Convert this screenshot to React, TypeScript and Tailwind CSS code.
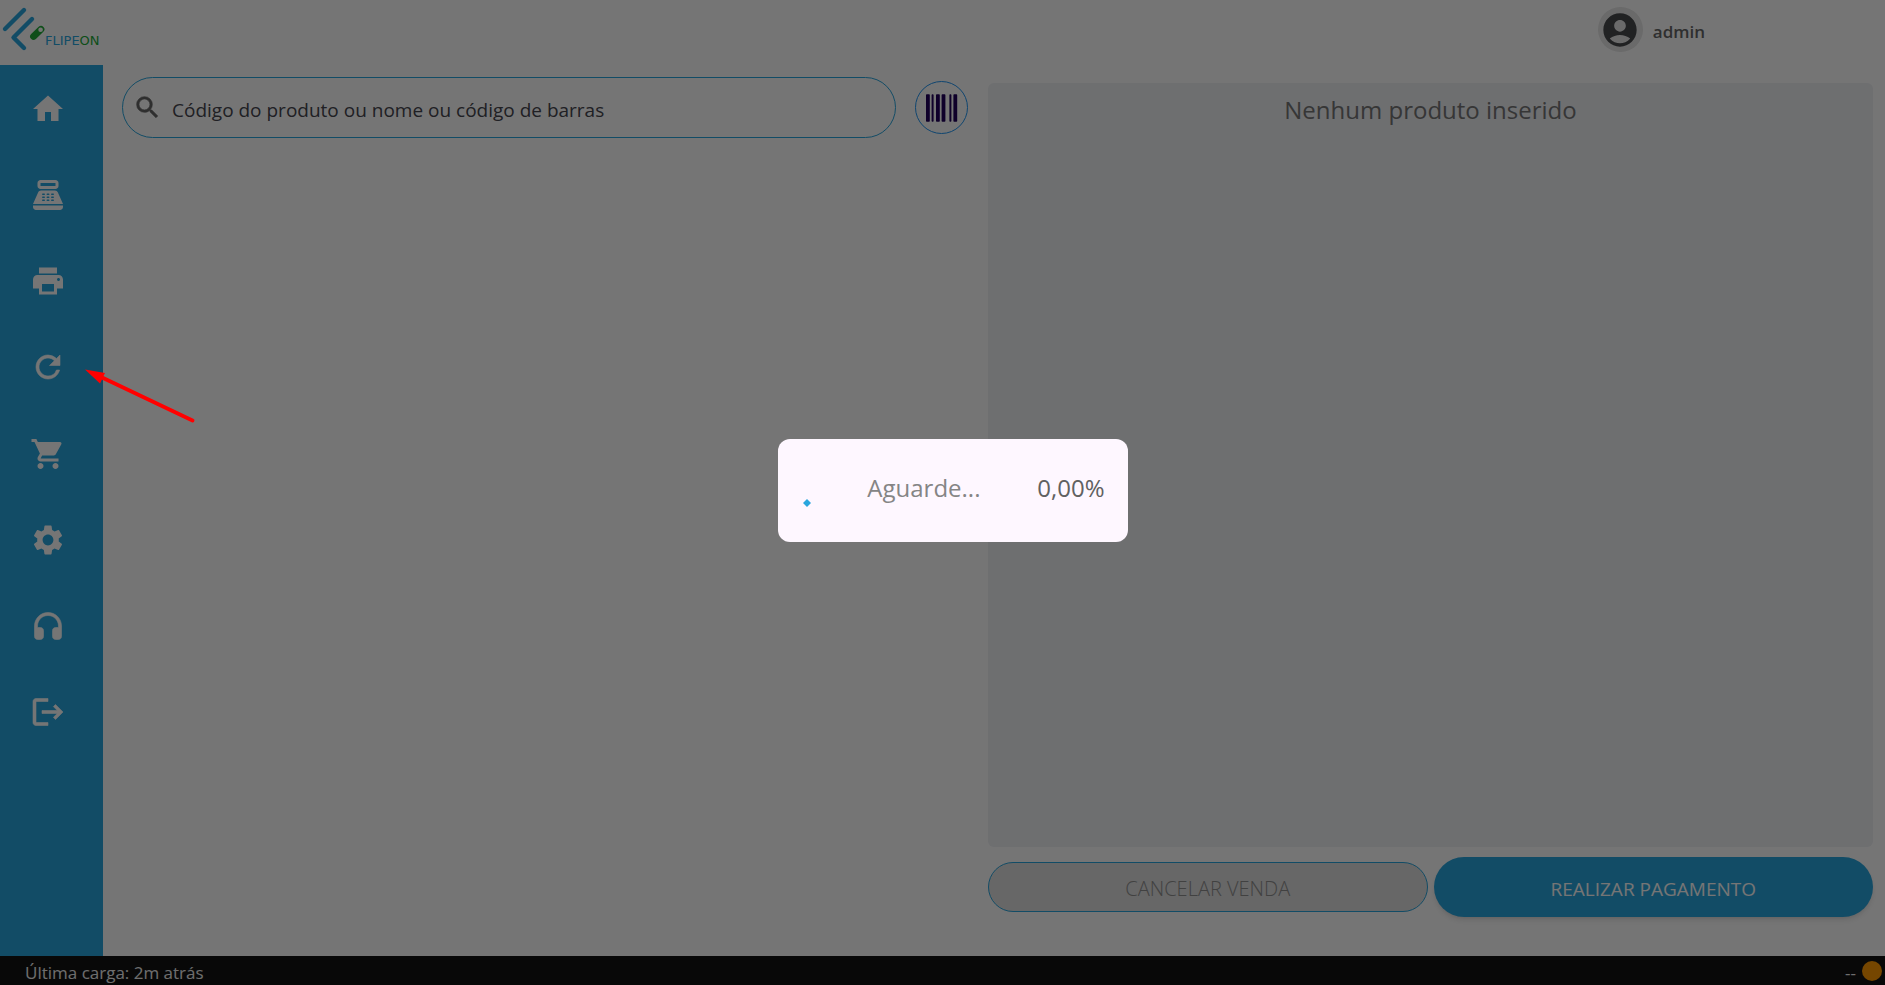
import type { ComponentType, ReactNode } from "react";
import {
  MdAccountCircle,
  MdHome,
  MdLogout,
  MdPointOfSale,
  MdPrint,
  MdRefresh,
  MdSearch,
  MdSettings,
  MdShoppingCart,
} from "react-icons/md";

type IconProps = { className?: string };

function HeadphonesIcon({ className }: IconProps) {
  return (
    <svg viewBox="0 0 24 24" fill="currentColor" stroke="currentColor" strokeWidth="0" className={className} aria-hidden="true">
      <path d="M3 12v7c0 1.1.9 2 2 2h2c1.1 0 2-.9 2-2v-4c0-1.1-.9-2-2-2H5v-1c0-3.87 3.13-7 7-7s7 3.13 7 7v1h-2c-1.1 0-2 .9-2 2v4c0 1.1.9 2 2 2h2c1.1 0 2-.9 2-2v-7c0-4.97-4.03-9-9-9s-9 4.03-9 9z" />
    </svg>
  );
}

function BarcodeIcon() {
  return (
    <svg viewBox="0 0 32 28" className="h-7 w-8" fill="#21005d" aria-hidden="true">
      <rect x="0" y="0.2" width="3.8" height="27.6" rx="0.8" />
      <rect x="5.6" y="0.2" width="2" height="27.6" rx="0.8" />
      <rect x="10" y="0.2" width="3.8" height="27.6" rx="0.8" />
      <rect x="15.6" y="0.2" width="3.8" height="27.6" rx="0.8" />
      <rect x="23.4" y="0.2" width="2" height="27.6" rx="0.8" />
      <rect x="27.400" y="0.2" width="3.8" height="27.6" rx="0.8" />
    </svg>
  );
}

function Logo() {
  return (
    <a href="#" className="flex items-end" aria-label="Flipeon">
      <svg viewBox="0 0 45 52" className="h-[52px] w-[45px]" fill="none" aria-hidden="true">
        <g stroke="#29a6de" strokeWidth="4.4" strokeLinecap="round" strokeLinejoin="round">
          <path d="M5 29L24 10" />
          <path d="M32 19L13.500 37.500L24 48" />
        </g>
        <path d="M33.500 36.500L41 29.300" stroke="#22ab38" strokeWidth="6.800" strokeLinecap="round" />
        <circle cx="40.600" cy="29.700" r="2.300" fill="#ffffff" />
      </svg>
      <span className="pb-1 font-['DejaVu_Sans',sans-serif] text-[13px] leading-[14px] text-[#29a6de]">
        FLIPE<span className="text-[#22ab38]">ON</span>
      </span>
    </a>
  );
}

const menu: { label: string; icon: ComponentType<IconProps>; line?: boolean }[] = [
  { label: "Início", icon: MdHome },
  { label: "Caixa", icon: MdPointOfSale },
  { label: "Imprimir", icon: MdPrint },
  { label: "Atualizar", icon: MdRefresh, line: true },
  { label: "Vendas", icon: MdShoppingCart },
  { label: "Configurações", icon: MdSettings },
  { label: "Suporte", icon: HeadphonesIcon, line: true },
  { label: "Sair", icon: MdLogout, line: true },
];

function Sidebar() {
  return (
    <nav className="flex w-[103px] shrink-0 flex-col items-start justify-between bg-[#29a6de] pt-[26px] pb-[226px] pl-[30px]">
      {menu.map(({ label, icon: Icon, line }) => (
        <button key={label} type="button" aria-label={label} className="text-white">
          <Icon className={line ? "size-9 stroke-[0.4] [&>path[fill=none]]:stroke-none" : "size-9"} />
        </button>
      ))}
    </nav>
  );
}

function SearchBar() {
  return (
    <div className="flex items-center gap-[19px] self-start pt-3">
      <label className="flex h-[61px] flex-1 items-center gap-2.5 rounded-full border border-[#29a6de] pl-2.5">
        <MdSearch className="size-[29px] shrink-0 stroke-[0.5] text-[#666666] [&>path[fill=none]]:stroke-none" />
        <input
          type="text"
          aria-label="Buscar produto"
          placeholder="Código do produto ou nome ou código de barras"
          className="min-w-0 flex-1 bg-transparent pt-1 text-[19px] leading-7 outline-none placeholder:text-[#46464f]"
        />
      </label>
      <button
        type="button"
        aria-label="Ler código de barras"
        className="flex size-[53px] shrink-0 items-center justify-center rounded-full border border-[#2196f3]"
      >
        <BarcodeIcon />
      </button>
    </div>
  );
}

function SalePanel() {
  return (
    <section className="flex flex-col pt-[18px] pb-[39px]">
      <div className="flex-1 rounded-md bg-[#eff1f5] pt-2.5 text-center text-[24px] leading-[34px] text-[#777777]">
        Nenhum produto inserido
      </div>
      <div className="mt-2.5 grid grid-cols-2 items-center gap-1.5">
        <button
          type="button"
          className="h-[50px] rounded-full border border-[#29a6de] bg-[#e0e0e0] pt-1 text-[20px] leading-7 font-light text-[#8f8f8f]"
        >
          CANCELAR VENDA
        </button>
        <button
          type="button"
          className="h-[60px] rounded-full bg-[#29a6de] pt-1 text-[19px] leading-7 text-white shadow-md"
        >
          REALIZAR PAGAMENTO
        </button>
      </div>
    </section>
  );
}

function Overlay({ children }: { children: ReactNode }) {
  return (
    <div className="fixed inset-0 flex items-center justify-center bg-black/54 pb-1 pl-5">{children}</div>
  );
}

function ProgressDialog() {
  return (
    <div
      role="dialog"
      aria-label="Atualização"
      className="flex h-[103px] w-[350px] items-center justify-between rounded-xl bg-[#fef7ff] pr-[23px] pl-[25px] text-[24px] leading-8"
    >
      <svg viewBox="0 0 8 8" className="mt-6 size-2" aria-hidden="true">
        <path d="M4 0L8 4L4 8L0 4Z" fill="#29a6de" />
      </svg>
      <p className="pb-1.5 text-[#858585]">Aguarde...</p>
      <p className="pb-1.5 text-[#616161]">0,00%</p>
    </div>
  );
}

function PointerArrow() {
  return (
    <svg
      viewBox="0 0 112 56"
      className="pointer-events-none fixed top-[368px] left-[84px] h-14 w-28"
      aria-hidden="true"
    >
      <path d="M17 9L108.500 52.500" stroke="#ff0000" strokeWidth="4" strokeLinecap="round" />
      <path d="M1 1.500L21 5L16 15.500Z" fill="#ff0000" />
    </svg>
  );
}

export default function App() {
  return (
    <div className="flex min-h-screen flex-col bg-white font-['Open_Sans','Noto_Sans',sans-serif]">
      <header className="flex h-[65px] items-start justify-between">
        <Logo />
        <div className="flex items-center gap-2.5 pt-[7px] pr-[180px]">
          <span className="flex size-[45px] items-center justify-center rounded-full bg-[#e6e6e6]">
            <MdAccountCircle className="size-10 text-[#484a4d]" />
          </span>
          <span className="pt-1 text-[17px] leading-6 font-semibold text-[#666666]">admin</span>
        </div>
      </header>
      <div className="flex flex-1">
        <Sidebar />
        <main className="grid flex-1 grid-cols-[846fr_885fr] gap-5 pr-3 pl-[19px]">
          <SearchBar />
          <SalePanel />
        </main>
      </div>
      <footer className="flex h-[29px] items-center justify-between bg-[#121212] pr-[3px] pl-[25px] text-[17px] leading-6 text-[#f0f0f0]">
        <span className="pt-1">Última carga: 2m atrás</span>
        <span className="flex items-center gap-1.5">
          <span className="pt-1">--</span>
          <span className="size-5 rounded-full bg-[#ff9800]" />
        </span>
      </footer>
      <Overlay>
        <ProgressDialog />
      </Overlay>
      <PointerArrow />
    </div>
  );
}
